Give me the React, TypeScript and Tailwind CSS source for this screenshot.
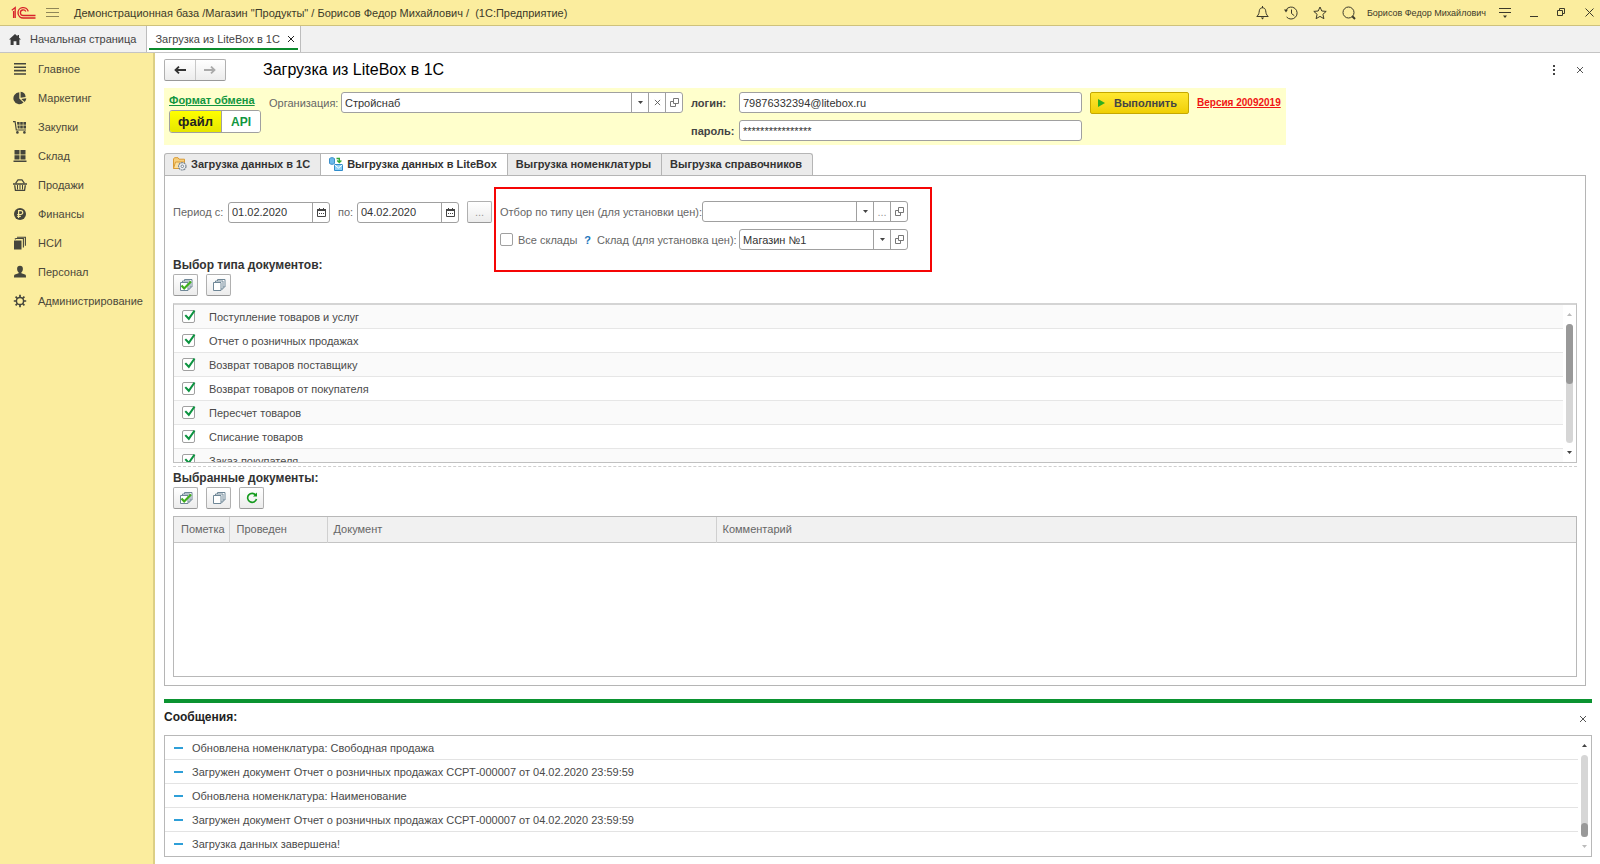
import React from "react";
import clsx from "clsx";

const menu = [
  { title: "Главное", icon: "main" },
  { title: "Маркетинг", icon: "marketing" },
  { title: "Закупки", icon: "purchases" },
  { title: "Склад", icon: "stock" },
  { title: "Продажи", icon: "sales" },
  { title: "Финансы", icon: "finance" },
  { title: "НСИ", icon: "catalogs" },
  { title: "Персонал", icon: "staff" },
  { title: "Администрирование", icon: "admin" },
];

const docTypes = [
  "Поступление товаров и услуг",
  "Отчет о розничных продажах",
  "Возврат товаров поставщику",
  "Возврат товаров от покупателя",
  "Пересчет товаров",
  "Списание товаров",
  "Заказ покупателя",
];

const messages = [
  "Обновлена номенклатура: Свободная продажа",
  "Загружен документ Отчет о розничных продажах ССРТ-000007 от 04.02.2020 23:59:59",
  "Обновлена номенклатура: Наименование",
  "Загружен документ Отчет о розничных продажах ССРТ-000007 от 04.02.2020 23:59:59",
  "Загрузка данных завершена!",
];

const Logo = () => (
  <svg width="25" height="14" viewBox="0 0 25 14" fill="none" stroke="#d8232a">
    <path d="M.8 4.2 4.2 1.6V12M2.6 5V12" strokeWidth="1.3" />
    <path d="M17.2 5.4A5.2 5.2 0 1 0 12.2 12H24.5" strokeWidth="1.4" />
    <path d="M14.8 5.6A2.8 2.8 0 1 0 12.2 9.5H24.5" strokeWidth="1.3" />
  </svg>
);

const MenuIcon = ({ name }: { name: string }) => (
  <svg width="14" height="14" viewBox="0 0 14 14" fill="#45463c" stroke="none">
    {name === "main" && (
      <path d="M1 1h12v1.6H1zM1 4.4h12V6H1zM1 7.8h12v1.6H1zM1 11.2h12v1.6H1z" />
    )}
    {name === "marketing" && (
      <>
        <path d="M6.3 1.2v6.2l4.2 4.2A6 6 0 1 1 6.3 1.2z" />
        <path d="M7.6.8a5.6 5.6 0 0 1 5 5.2l-5 .8zM8.3 8l5-.8a5.5 5.5 0 0 1-1.6 3.8z" />
      </>
    )}
    {name === "purchases" && (
      <>
        <path d="M0 1h2.6l1.2 8.4H13v1.2H2.8L1.6 2.2H0z" />
        <path d="M4 2h2.6v2.8H4.3zM7.2 2h2.6v2.8H7.2zM10.4 2H13v2.8h-2.6zM4.5 5.5h2.1v3H4.8zM7.2 5.5h2.6v3H7.2zM10.4 5.5H13v3h-2.6z" />
        <circle cx="4.4" cy="12.4" r="1.3" />
        <circle cx="11.4" cy="12.4" r="1.3" />
      </>
    )}
    {name === "stock" && (
      <path d="M1.5 1h5v4.4h-5zM7.5 1h5v4.4h-5zM1.5 6.2h5v4.2h-5zM7.5 6.2h5v4.2h-5zM.5 11.4h13v1.6H.5z" />
    )}
    {name === "sales" && (
      <>
        <path d="M0 5.2h14v1.6H0zM1 7.2h1.4l.6 4.6h8l.6-4.6H13l-.9 5.8H1.9z" />
        <path d="M4 7h1v4.6H4zM6.5 7h1v4.6h-1zM9 7h1v4.6H9z" />
        <path d="M2.6 5.4 5 1.8h4l2.4 3.6" fill="none" stroke="#45463c" strokeWidth="1.2" />
      </>
    )}
    {name === "finance" && (
      <>
        <circle cx="7" cy="7" r="6" />
        <path
          d="M5.6 11V3.6h2.2a1.9 1.9 0 0 1 0 3.9H4.2M4.2 9.3h3.6"
          fill="none"
          stroke="#faeb9c"
          strokeWidth="1.2"
        />
      </>
    )}
    {name === "catalogs" && (
      <>
        <path d="M1 4.5h7.5v9H1z" />
        <path d="M1.8 3.2 3 2.5h7.4v9M4 1.2h8.4v8.600" fill="none" stroke="#45463c" strokeWidth="1.1" />
      </>
    )}
    {name === "staff" && (
      <path d="M7 .8c1.9 0 2.9 1.2 2.9 3 0 1.6-.7 2.9-1.5 3.5v1l3.6 1.3c.8.3 1 .9 1 2.9H1c0-2 .2-2.6 1-2.9l3.6-1.3v-1C4.8 6.7 4.1 5.4 4.1 3.8 4.1 2 5.1.8 7 .8z" />
    )}
    {name === "admin" && (
      <>
        <circle cx="7" cy="7" r="3.6" fill="none" stroke="#45463c" strokeWidth="1.5" />
        <path
          d="M7 3.200V.8M7 13.200v-2.400M3.200 7H.8M13.200 7h-2.400M4.300 4.300 2.600 2.600M11.400 11.400 9.700 9.700M4.300 9.700l-1.700 1.700M11.400 2.600 9.700 4.300"
          stroke="#45463c"
          strokeWidth="1.7"
        />
      </>
    )}
  </svg>
);

const Cross = ({ size = 8, color = "#555" }: { size?: number; color?: string }) => (
  <svg width={size} height={size} viewBox="0 0 8 8" stroke={color}>
    <path d="M1 1l6 6M7 1L1 7" />
  </svg>
);

const Arrow = ({ up, color = "#444" }: { up?: boolean; color?: string }) => (
  <svg width="5" height="3" viewBox="0 0 5 3" fill={color} className={clsx(up && "rotate-180")}>
    <path d="M0 0h5L2.5 3z" />
  </svg>
);

const OpenIcon = () => (
  <svg width="9" height="9" viewBox="0 0 9 9" fill="none" stroke="#777">
    <path d="M3.5.5h5v5h-5zM3.5 3.5h-3v5h5v-3" />
  </svg>
);

const Calendar = () => (
  <svg width="9" height="9" viewBox="0 0 9 9" fill="none" stroke="#444">
    <path d="M.5 1.5h8v7h-8z" />
    <path d="M0 2h9" strokeWidth="2" />
    <path d="M2.5 0v1M6.5 0v1M2 5.5h1M4 5.5h1M6 5.5h1" />
  </svg>
);

const NavArrow = ({ back }: { back?: boolean }) => (
  <svg
    width="12"
    height="8"
    viewBox="0 0 12 8"
    fill="none"
    stroke={back ? "#333" : "#aaa"}
    strokeWidth="1.8"
    className={clsx(!back && "rotate-180")}
  >
    <path d="M12 4H1.5M5 .6 1.5 4 5 7.4" />
  </svg>
);

const Sheets = ({ checked }: { checked?: boolean }) => (
  <svg width="14" height="14" viewBox="0 0 14 14" fill="#fff" stroke="#6f8797">
    <path d="M5.5 1.5H13V9H5.5z" />
    <path d="M3.5 3H11v8H3.5z" />
    <path d="M1.5 4.5H9v8H1.5z" />
    {checked && <path d="M2.5 7.5 5.2 10.5 12 3.5" fill="none" stroke="#3fae1c" strokeWidth="2.2" />}
  </svg>
);

const Refresh = () => (
  <svg width="12" height="12" viewBox="0 0 12 12" fill="none" stroke="#149a1e" strokeWidth="1.6">
    <path d="M9.8 3.2A4.5 4.5 0 1 0 10.5 7" />
    <path d="M11 .6v4H7z" fill="#149a1e" stroke="none" />
  </svg>
);

const FolderGear = () => (
  <svg width="14" height="14" viewBox="0 0 14 14">
    <path d="M.5 11.5V2l1-1.3H5l1 1.5h5.5v3" fill="#f7cf7c" stroke="#d99b35" />
    <path d="m.5 11.5 2-6.5h9l-1 6.5z" fill="#fbe0a0" stroke="#d99b35" />
    <circle cx="9.3" cy="9.3" r="3.7" fill="#eef1f4" stroke="#7a8794" strokeWidth="1.2" strokeDasharray="2 .6" />
    <circle cx="9.3" cy="9.3" r="1.3" fill="#fff" stroke="#7a8794" />
  </svg>
);

const Transfer = () => (
  <svg width="14" height="14" viewBox="0 0 14 14">
    <path d="M.5 1.8c0-1.5 5-1.5 5 0v4.4c0 1.5-5 1.5-5 0z" fill="#6bb9ea" stroke="#3b8fca" />
    <path d="M7.5 1.5h2.8v3.2M8.2 3.6l2.1 2 2.1-2" fill="none" stroke="#35a535" strokeWidth="1.4" />
    <path d="M5.5 7.5h8v6h-8z" fill="#8fd0f5" stroke="#2f8ccc" />
    <path d="m5.5 7.8 4 3.2 4-3.2" fill="none" stroke="#fff" />
  </svg>
);

const toolButton =
  "flex h-[22px] w-[25px] items-center justify-center rounded-[2px] border border-[#b0b0b0] border-b-[#999] bg-linear-to-b from-white to-[#ececec]";
const fieldBox = "flex h-[21px] overflow-hidden rounded-[3px] border border-[#a0a0a0] bg-white";
const fieldPart = "flex w-[17px] shrink-0 items-center justify-center border-l border-[#a0a0a0]";

type ComboProps = {
  id: string;
  value: string;
  className: string;
  children?: React.ReactNode;
};

const Combo = ({ id, value, className, children }: ComboProps) => (
  <div className={clsx(fieldBox, className)}>
    <div className="relative flex min-w-0 flex-1">
      <select id={id} className="w-full appearance-none px-[3px] text-[#333] outline-none">
        <option>{value}</option>
      </select>
      <span className="pointer-events-none absolute inset-y-0 right-0 flex w-[17px] items-center justify-center border-l border-[#a0a0a0]">
        <Arrow />
      </span>
    </div>
    {children}
    <button className={fieldPart} aria-label="Открыть">
      <OpenIcon />
    </button>
  </div>
);

const DateField = ({ id, value }: { id: string; value: string }) => (
  <div className={clsx(fieldBox, "w-[102px]")}>
    <input id={id} defaultValue={value} className="min-w-0 flex-1 px-[3px] text-[#333] outline-none" />
    <button className={fieldPart} aria-label="Календарь">
      <Calendar />
    </button>
  </div>
);

const ScrollBar = ({ end }: { end?: boolean }) => (
  <div className="flex w-[13px] shrink-0 flex-col items-center py-2">
    <Arrow up color={end ? "#444" : "#bbb"} />
    <div
      className={clsx(
        "my-2 flex w-[7px] flex-1 flex-col rounded-full bg-[#d6d6d6]",
        end ? "justify-end" : "justify-start"
      )}
    >
      <div className={clsx("rounded-full bg-[#999]", end ? "h-[14px]" : "h-[60px]")} />
    </div>
    <Arrow color={end ? "#bbb" : "#444"} />
  </div>
);

const TopBar = () => (
  <header className="flex h-[26px] shrink-0 items-center border-b border-[#cfc27c] bg-[#fbed9e] pr-[6px] pl-[11px] text-[#3c3a2a]">
    <Logo />
    <button className="ml-[10px]" aria-label="Меню">
      <svg width="13" height="11" viewBox="0 0 13 11" stroke="#8f8658">
        <path d="M0 1.5h13M0 5.5h13M0 9.5h13" />
      </svg>
    </button>
    <span className="ml-[15px] whitespace-pre">
      {'Демонстрационная база /Магазин "Продукты" / Борисов Федор Михайлович /  (1С:Предприятие)'}
    </span>
    <div className="ml-auto flex items-center gap-[15px]">
      <button aria-label="Уведомления">
        <svg width="13" height="14" viewBox="0 0 13 14" fill="none" stroke="#3c3a2a">
          <path d="M.8 10.5C3 8.5 3 7 3.300 4.800 3.600 2.800 4.600 1.800 6.500 1.800s2.900 1 3.200 3C10 7 10 8.500 12.200 10.500zM6.500 0v2" />
          <path d="M4.8 11.5h3.400l-1.700 2z" fill="#3c3a2a" stroke="none" />
        </svg>
      </button>
      <button aria-label="История">
        <svg width="14" height="14" viewBox="0 0 14 14" fill="none" stroke="#3c3a2a">
          <path d="M2.2 3.6A6 6 0 1 1 2.600 11M7.500 3.500V7.500l2.800 2.200" />
          <path d="M0 3.500h4L2 6.500z" fill="#3c3a2a" stroke="none" />
        </svg>
      </button>
      <button aria-label="Избранное">
        <svg width="14" height="14" viewBox="0 0 14 14" fill="none" stroke="#3c3a2a">
          <path d="m7 1 1.800 4 4.400.4-3.300 2.900 1 4.400L7 10.400l-3.900 2.300 1-4.400L.8 5.400l4.400-.4z" />
        </svg>
      </button>
      <button aria-label="Поиск">
        <svg width="14" height="14" viewBox="0 0 14 14" fill="none" stroke="#3c3a2a">
          <circle cx="6.5" cy="6.5" r="5.5" />
          <path d="m10.3 10.3 2.700 2.700" strokeWidth="2" />
        </svg>
      </button>
      <span className="-ml-1 text-[9px]">Борисов Федор Михайлович</span>
      <button className="-ml-0.5" aria-label="Настройки">
        <svg width="12" height="12" viewBox="0 0 12 12" stroke="#3c3a2a">
          <path d="M0 1.5h12M0 5.5h12" />
          <path d="M4 8.5h4L6 11z" fill="#3c3a2a" stroke="none" />
        </svg>
      </button>
      <div className="ml-1 flex items-center gap-[19px]">
        <button aria-label="Свернуть">
          <svg width="8" height="9" viewBox="0 0 8 9" stroke="#3c3a2a">
            <path d="M0 8.5h8" />
          </svg>
        </button>
        <button aria-label="Развернуть">
          <svg width="9" height="9" viewBox="0 0 9 9" fill="none" stroke="#3c3a2a">
            <path d="M.5 2.5h5v5h-5zM2.5 2.500v-2h5v5h-2" />
          </svg>
        </button>
        <button aria-label="Закрыть">
          <svg width="9" height="9" viewBox="0 0 9 9" stroke="#3c3a2a">
            <path d="m.5.5 8 8M8.5.5l-8 8" />
          </svg>
        </button>
      </div>
    </div>
  </header>
);

const WindowTabs = () => (
  <nav className="flex h-[27px] shrink-0 border-b border-[#c4c4c4] bg-[#f1f1f1]">
    <a href="#home" className="flex items-center gap-[9px] border-r border-[#bdbdbd] pr-[10px] pl-[9px] text-[#444]">
      <svg width="12" height="11" viewBox="0 0 12 11" fill="#3a3a3a">
        <path d="M6 0 0 5.600h1.600V11h3V7.200h2.800V11h3V5.600H12L10 3.700V1H8.500v1.300z" />
      </svg>
      Начальная страница
    </a>
    <div className="flex border-r border-[#bdbdbd] bg-white px-[2px] pb-[2px]">
      <div className="flex items-center gap-[7px] border-b-[2px] border-[#0b8a2c] pt-[3px] pr-[3px] pl-[6px] text-[#444]">
        <span>Загрузка из LiteBox в 1С</span>
        <button aria-label="Закрыть вкладку">
          <Cross color="#222" />
        </button>
      </div>
    </div>
  </nav>
);

const Sidebar = () => (
  <aside className="w-[155px] shrink-0 border-r-2 border-[#dccf85] bg-[#fbed9e] pt-px">
    {menu.map((item, i) => (
      <a key={i} href="#menu" className="flex h-[29px] items-center gap-[11px] pl-[13px] text-[#4b483a]">
        <MenuIcon name={item.icon} />
        {item.title}
      </a>
    ))}
  </aside>
);

const ExchangeForm = () => (
  <section className="mt-[7px] flex h-[57px] w-[1122px] max-w-full items-start bg-[#ffffcc] pt-[4px] pl-[5px]">
    <div className="w-[100px] shrink-0">
      <a href="#format" className="block font-bold whitespace-nowrap text-[#119640] underline">
        Формат обмена
      </a>
      <div className="mt-[2px] flex h-[23px] w-[92px] overflow-hidden rounded-[3px] border border-[#a0a0a0] text-[13px]">
        <button className="w-[52px] border-r border-[#a0a0a0] bg-linear-to-b from-[#ffff00] to-[#e6e600] font-bold text-[#222]">
          файл
        </button>
        <button className="flex-1 bg-white text-[12px] font-bold text-[#119640]">API</button>
      </div>
    </div>
    <label htmlFor="org" className="flex h-[21px] w-[72px] shrink-0 items-center text-[#666]">
      Организация:
    </label>
    <Combo id="org" value="Стройснаб" className="w-[342px] shrink-0">
      <button className={fieldPart} aria-label="Очистить">
        <Cross size={7} />
      </button>
    </Combo>
    <div className="ml-[8px] grid shrink-0 grid-cols-[48px_343px] gap-y-[7px]">
      <label htmlFor="login" className="flex items-center font-bold text-[#444]">
        логин:
      </label>
      <input
        id="login"
        defaultValue="79876332394@litebox.ru"
        className="h-[21px] rounded-[3px] border border-[#a0a0a0] bg-white px-[3px] text-[#333]"
      />
      <label htmlFor="password" className="flex items-center font-bold text-[#444]">
        пароль:
      </label>
      <input
        id="password"
        defaultValue="****************"
        className="h-[21px] rounded-[3px] border border-[#a0a0a0] bg-white px-[3px] text-[#333]"
      />
    </div>
    <button className="ml-[8px] flex h-[22px] w-[99px] shrink-0 items-center gap-[9px] rounded-[2px] border border-[#c5a800] bg-linear-to-b from-[#ffe830] to-[#f0cf00] pl-[7px] font-bold text-[#444]">
      <svg width="7" height="8" viewBox="0 0 7 8" fill="#2fae1f">
        <path d="M0 0v8l7-4z" />
      </svg>
      Выполнить
    </button>
    <a href="#version" className="ml-[8px] flex h-[22px] items-center text-[10px] font-bold whitespace-nowrap text-[#f01414] underline">
      Версия 20092019
    </a>
  </section>
);

const tab =
  "flex h-[22px] items-center gap-[4px] border border-b-0 border-[#b5b5b5] pr-[10px] pb-[2px] pl-[8px] whitespace-nowrap";

const FormTabs = () => (
  <div role="tablist" className="mt-[8px] flex font-bold text-[#333]">
    <button role="tab" className={clsx(tab, "rounded-tl-[3px] bg-[#ebebeb]")}>
      <FolderGear />
      Загрузка данных в 1С
    </button>
    <button role="tab" aria-selected className={clsx(tab, "-mb-px h-[23px] border-x-0 bg-white")}>
      <Transfer />
      Выгрузка данных в LiteBox
    </button>
    <button role="tab" className={clsx(tab, "bg-[#ebebeb]")}>
      Выгрузка номенклатуры
    </button>
    <button role="tab" className={clsx(tab, "rounded-tr-[3px] border-l-0 bg-[#ebebeb]")}>
      Выгрузка справочников
    </button>
  </div>
);

const Filters = () => (
  <div className="flex items-start text-[#666]">
    <div className="flex items-center pt-[14px]">
      <label htmlFor="from" className="w-[55px]">
        Период с:
      </label>
      <DateField id="from" value="01.02.2020" />
      <label htmlFor="to" className="ml-[8px] w-[19px]">
        по:
      </label>
      <DateField id="to" value="04.02.2020" />
      <button className={clsx(toolButton, "ml-[8px] text-[#999]")} aria-label="Выбрать период">
        ...
      </button>
    </div>
    <div className="ml-[2px] h-[85px] w-[438px] border-2 border-[#f50505] pt-[12px] pl-[4px]">
      <div className="flex items-center">
        <label htmlFor="price" className="w-[202px] whitespace-nowrap">
          Отбор по типу цен (для установки цен):
        </label>
        <Combo id="price" value="" className="w-[206px]">
          <button className={clsx(fieldPart, "text-[#999]")} aria-label="Выбрать">
            ...
          </button>
        </Combo>
      </div>
      <div className="mt-[7px] flex items-center">
        <input
          id="all"
          type="checkbox"
          className="h-[13px] w-[13px] appearance-none rounded-[2px] border border-[#a0a0a0] bg-white"
        />
        <label htmlFor="all" className="w-[64px] pl-[5px] whitespace-nowrap">
          Все склады
        </label>
        <button className="w-[20px] pr-[6px] text-right font-bold text-[#1b75bb]">?</button>
        <label htmlFor="store" className="w-[142px] whitespace-nowrap">
          Склад (для установка цен):
        </label>
        <Combo id="store" value="Магазин №1" className="w-[169px]" />
      </div>
    </div>
  </div>
);

const ListButtons = ({ refresh }: { refresh?: boolean }) => (
  <div className="flex gap-[8px]">
    <button className={toolButton} aria-label="Отметить все">
      <Sheets checked />
    </button>
    <button className={toolButton} aria-label="Снять отметки">
      <Sheets />
    </button>
    {refresh && (
      <button className={toolButton} aria-label="Обновить">
        <Refresh />
      </button>
    )}
  </div>
);

const DocTypes = () => (
  <div className="mt-[7px] flex h-[160px] shrink-0 overflow-hidden border border-t-2 border-[#c0c0c0] border-t-[#d4d4d4]">
    <ul className="min-w-0 flex-1">
      {docTypes.map((name, i) => (
        <li key={i} className="h-[24px] border-b border-[#e6e6e6] odd:bg-[#fafafa]">
          <label className="flex h-full items-center gap-[14px] pl-[8px] text-[#4a4a4a]">
            <span className="relative h-[13px] w-[13px]">
              <input
                type="checkbox"
                defaultChecked
                className="peer block h-[13px] w-[13px] appearance-none rounded-[2px] border border-[#a0a0a0] bg-white"
              />
              <svg
                viewBox="0 0 14 14"
                fill="none"
                stroke="#0c9340"
                strokeWidth="2.2"
                className="pointer-events-none absolute inset-0 h-[13px] w-[14px] overflow-visible opacity-0 peer-checked:opacity-100"
              >
                <path d="m3 5.5 3.800 4L13 .5" />
              </svg>
            </span>
            {name}
          </label>
        </li>
      ))}
    </ul>
    <ScrollBar />
  </div>
);

const Documents = () => (
  <div className="mt-[7px] min-h-[161px] flex-1 border border-[#b8b8b8]">
    <table className="w-full table-fixed text-left text-[#666]">
      <thead>
        <tr className="h-[25px] border-b border-[#c4c4c4] bg-[#f1f1f1]">
          <th className="w-[55px] border-r border-[#d0d0d0] pl-[7px] font-normal">Пометка</th>
          <th className="w-[98px] border-r border-[#d0d0d0] pl-[7px] font-normal">Проведен</th>
          <th className="w-[389px] border-r border-[#d0d0d0] pl-[6px] font-normal">Документ</th>
          <th className="pl-[6px] font-normal">Комментарий</th>
        </tr>
      </thead>
      <tbody />
    </table>
  </div>
);

const Messages = () => (
  <section className="mt-[13px] mr-[8px] border-t-[4px] border-[#0b9331]">
    <div className="flex h-[32px] items-start justify-between pt-[6px] pr-[5px]">
      <h2 className="text-[12px] font-bold text-[#222]">Сообщения:</h2>
      <button className="pt-[6px]" aria-label="Закрыть сообщения">
        <Cross />
      </button>
    </div>
    <div className="flex h-[122px] border border-[#b8b8b8]">
      <ul className="min-w-0 flex-1">
        {messages.map((text, i) => (
          <li
            key={i}
            className="flex h-[24px] items-center gap-[9px] border-b border-[#e3e3e3] pl-[9px] text-[#4a4a4a] last:border-b-0"
          >
            <span className="h-[2px] w-[9px] bg-[#2e9fd8]" />
            {text}
          </li>
        ))}
      </ul>
      <ScrollBar end />
    </div>
  </section>
);

const App = () => {
  return (
    <div className="flex min-h-screen flex-col bg-white font-['Liberation_Sans',Arial,sans-serif] text-[11px] leading-[16px]">
      <TopBar />
      <WindowTabs />
      <div className="flex flex-1">
        <Sidebar />
        <main className="flex min-w-0 flex-1 flex-col pt-[6px] pb-[7px] pl-[9px]">
          <div className="flex h-[22px] items-center">
            <div className="flex h-[22px] w-[62px] rounded-[2px] border border-[#b0b0b0] border-b-[#999] bg-linear-to-b from-white to-[#ececec]">
              <button className="flex flex-1 items-center justify-center border-r border-[#c8c8c8]" aria-label="Назад">
                <NavArrow back />
              </button>
              <button className="flex flex-1 items-center justify-center" aria-label="Вперед">
                <NavArrow />
              </button>
            </div>
            <h1 className="ml-[37px] text-[16px] text-black">Загрузка из LiteBox в 1С</h1>
            <div className="ml-auto flex items-center gap-[20px] pr-[16px]">
              <button aria-label="Еще">
                <svg width="3" height="10" viewBox="0 0 3 10" fill="#444">
                  <path d="M0 0h2v2H0zM0 4h2v2H0zM0 8h2v2H0z" />
                </svg>
              </button>
              <button aria-label="Закрыть">
                <Cross />
              </button>
            </div>
          </div>
          <ExchangeForm />
          <FormTabs />
          <section className="mr-[14px] flex flex-1 flex-col border border-[#b5b5b5] px-[8px] pt-[11px] pb-[8px]">
            <Filters />
            <h2 className="mt-[-15px] mb-px text-[12px] font-bold text-[#333]">Выбор типа документов:</h2>
            <ListButtons />
            <DocTypes />
            <div className="mt-[3px] border-t border-dashed border-[#cfcfcf]" />
            <h2 className="mt-[3px] mb-px text-[12px] font-bold text-[#333]">Выбранные документы:</h2>
            <ListButtons refresh />
            <Documents />
          </section>
          <Messages />
        </main>
      </div>
    </div>
  );
};

export default App;
